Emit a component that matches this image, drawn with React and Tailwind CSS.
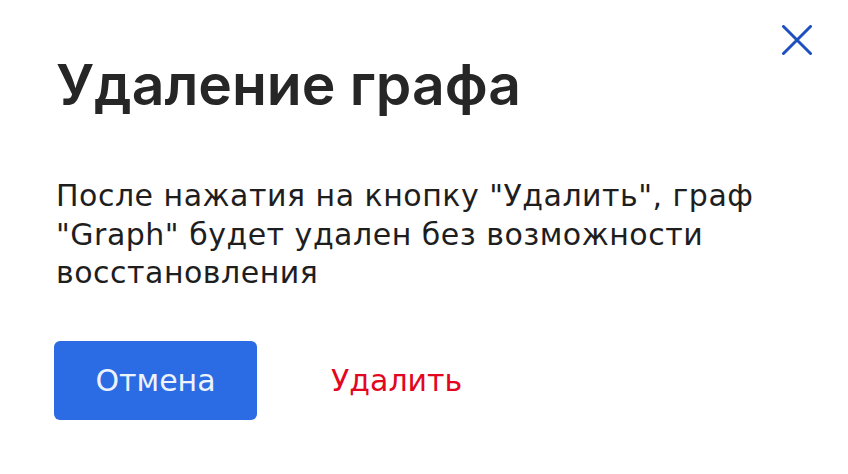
import React from 'react';

function CloseIcon() {
  return (
    <svg width="30" height="30" viewBox="0 0 30 30" fill="none">
      <path d="M1.5 1.5 L28.5 28.5 M28.5 1.5 L1.5 28.5" stroke="#1d4fbf" strokeWidth="3" strokeLinecap="round" />
    </svg>
  );
}

export default function App() {
  return (
    <div className="relative w-[848px] h-[474px] bg-white">
      <button className="absolute left-[782px] top-[25px]" aria-label="Закрыть">
        <CloseIcon />
      </button>
      <div className="flex flex-col pl-[56px] pt-[56px]">
        <h1 className="font-['Inter',sans-serif] font-semibold text-[57px] leading-[58px] text-[#262626]">
          Удаление графа
        </h1>
        <p className="mt-[63px] w-[740px] font-['DejaVu_Sans',sans-serif] text-[30px] leading-[38.5px] tracking-[0.5px] text-[#1e1e1e]">
          После нажатия на кнопку "Удалить", граф "Graph" будет удален без возможности восстановления
        </p>
        <div className="mt-[48px] -ml-[2px] flex items-center">
          <button className="w-[203px] h-[79px] rounded-[6px] bg-[#2b6be4] text-[#eef2fb] font-['DejaVu_Sans',sans-serif] text-[30px]">
            Отмена
          </button>
          <button className="ml-[74px] font-['DejaVu_Sans',sans-serif] text-[30px] text-[#e3061f]">
            Удалить
          </button>
        </div>
      </div>
    </div>
  );
}
